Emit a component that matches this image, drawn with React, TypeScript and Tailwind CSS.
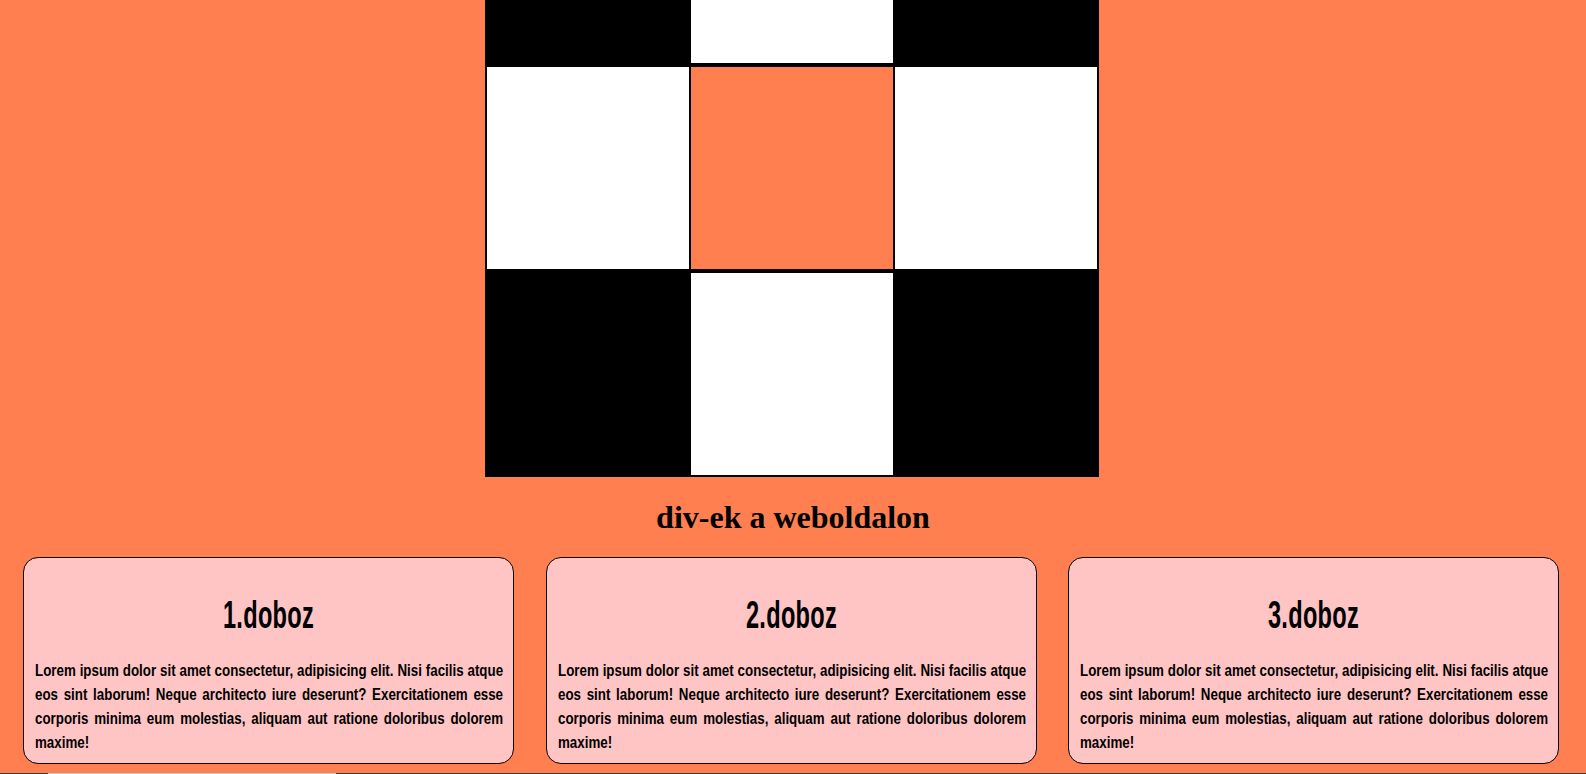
const cells = [
  "bg-black", "bg-white", "bg-black",
  "bg-white", "bg-[#ff7f50]", "bg-white",
  "bg-black", "bg-white", "bg-black",
];

const lines = [
  "Lorem ipsum dolor sit amet consectetur, adipisicing elit. Nisi facilis atque",
  "eos sint laborum! Neque architecto iure deserunt? Exercitationem esse",
  "corporis minima eum molestias, aliquam aut ratione doloribus dolorem",
];

// nincs Oswald, ezert a Liberation Sans-t nyomjuk ossze vizszintesen
const Doboz = ({ n }: { n: number }) => (
  <div className="w-[491px] h-[207px] shrink-0 border border-black rounded-[15px] bg-[#ffc4c4] pt-[37px] pl-[11px] pr-[10px]">
    <h2 className="text-center text-[38px] leading-[40px] font-bold text-black">
      <span className="inline-block scale-x-[0.62] tracking-[0.5px]">{n}.doboz</span>
    </h2>
    <div className="mt-[24px] text-[17px] leading-[24px] font-bold text-black">
      {lines.map((l) => (
        <p key={l} className="w-[597px] origin-left scale-x-[0.784] text-justify [text-align-last:justify]">
          {l}
        </p>
      ))}
      <p className="w-[597px] origin-left scale-x-[0.784]">maxime!</p>
    </div>
  </div>
);

export default function App() {
  return (
    <div className="h-[774px] flex flex-col bg-[#ff7f50] font-['Liberation_Sans',Arial,sans-serif]">
      <div className="flex-1 overflow-hidden">
        {/* 3x3 kocka, a teteje kilog felul */}
        <div className="flex justify-center pr-[2px]">
          <div className="mt-[-141px] w-[614px] bg-black p-[2px] grid grid-cols-3 gap-x-[2px] gap-y-[4px]">
            {cells.map((c, i) => (
              <div key={i} className={`h-[202px] ${c}`}></div>
            ))}
          </div>
        </div>

        <h1 className="mt-[22px] text-center text-[32px] leading-[36px] font-bold text-black font-['Liberation_Serif',serif]">
          div-ek a weboldalon
        </h1>

        <div className="mt-[22px] flex pl-[23px] gap-[31.5px]">
          <Doboz n={1} />
          <Doboz n={2} />
          <Doboz n={3} />
        </div>
      </div>

      {/* vizszintes gorgetosav alja */}
      <div className="h-px bg-[#3b3b3b] flex">
        <div className="ml-[48px] w-[288px] bg-[#c8c8c8]"></div>
      </div>
    </div>
  );
}
